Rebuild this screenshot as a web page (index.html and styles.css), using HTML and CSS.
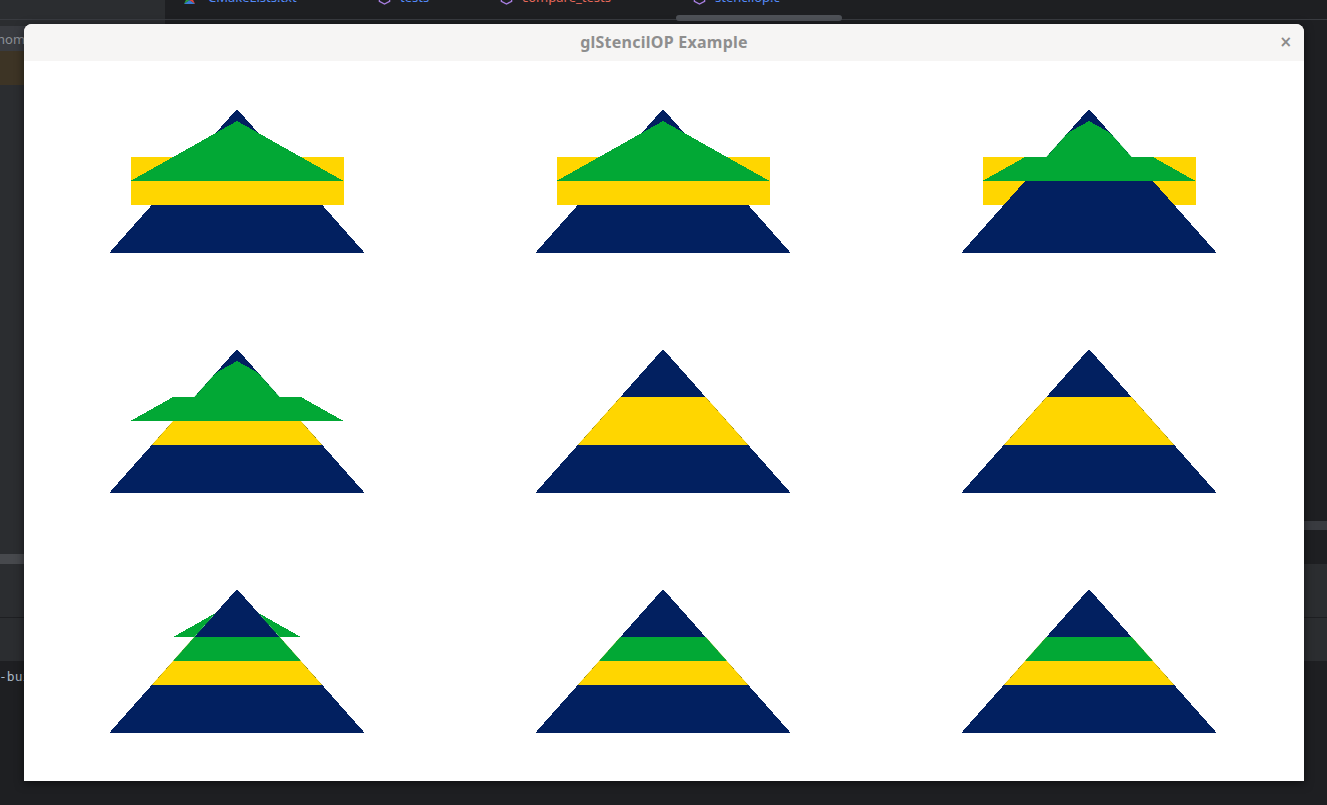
FILE: index.html
```html
<!DOCTYPE html>
<html lang="en">
<head>
<meta charset="utf-8">
<title>glStencilOP Example</title>
<link rel="stylesheet" href="styles.css">
</head>
<body>
<div class="ide">
  <div class="topbar">
    <div class="proj-head"></div>
    <div class="tabs">
      <div class="tab tab-1">
        <svg class="ticon" viewBox="0 0 14 14"><polygon points="7,1 1,13 7,9" fill="#2a9d3c"/><polygon points="7,1 13,13 7,9" fill="#e0443a"/><polygon points="1,13 13,13 7,9" fill="#3a7bd5"/></svg>
        <span class="tlabel blue">CMakeLists.txt</span>
      </div>
      <div class="tab tab-2">
        <svg class="ticon" viewBox="0 0 14 14"><polygon points="7,1 12.5,4 12.5,10 7,13 1.5,10 1.5,4" fill="none" stroke="#a77ee0" stroke-width="1.5"/></svg>
        <span class="tlabel blue">tests</span>
      </div>
      <div class="tab tab-3">
        <svg class="ticon" viewBox="0 0 14 14"><polygon points="7,1 12.5,4 12.5,10 7,13 1.5,10 1.5,4" fill="none" stroke="#a77ee0" stroke-width="1.5"/></svg>
        <span class="tlabel red">compare_tests</span>
      </div>
      <div class="tab tab-4">
        <svg class="ticon" viewBox="0 0 14 14"><polygon points="7,1 12.5,4 12.5,10 7,13 1.5,10 1.5,4" fill="none" stroke="#a77ee0" stroke-width="1.5"/></svg>
        <span class="tlabel blue">stencilop.c</span>
      </div>
    </div>
  </div>
  <div class="main">
    <div class="project">
      <div class="pj-gap"></div>
      <div class="pj-path"><span class="pj-text">home</span></div>
      <div class="pj-sel"></div>
      <div class="pj-tree"></div>
      <div class="pj-scroll"></div>
    </div>
    <div class="editor">
      <div class="code"></div>
      <div class="ed-scroll"></div>
      <div class="ed-foot"></div>
    </div>
  </div>
  <div class="tool">
    <div class="tool-head"></div>
    <div class="tool-tabs"></div>
    <div class="terminal"><span class="term-text">-build</span></div>
  </div>
</div>
<div class="hthumb"></div>

<div class="window">
  <div class="titlebar">
    <span></span>
    <span class="wtitle">glStencilOP Example</span>
    <span class="wclose">×</span>
  </div>
  <div class="canvas">
    <div class="cell">
      <svg class="gl" viewBox="-1 -1 2 2" preserveAspectRatio="none" shape-rendering="crispEdges">
        <use href="#shN" class="navy"/><use href="#shY" class="yel"/><use href="#shG" class="grn"/>
      </svg>
    </div>
    <div class="cell">
      <svg class="gl" viewBox="-1 -1 2 2" preserveAspectRatio="none" shape-rendering="crispEdges">
        <use href="#shN" class="navy"/><use href="#shY" class="yel"/><use href="#shG" class="grn"/>
      </svg>
    </div>
    <div class="cell">
      <svg class="gl" viewBox="-1 -1 2 2" preserveAspectRatio="none" shape-rendering="crispEdges">
        <use href="#shY" class="yel"/><use href="#shN" class="navy"/><use href="#shG" class="grn" clip-path="url(#cNY)"/>
      </svg>
    </div>
    <div class="cell">
      <svg class="gl" viewBox="-1 -1 2 2" preserveAspectRatio="none" shape-rendering="crispEdges">
        <use href="#shN" class="navy"/><use href="#shY" class="yel" clip-path="url(#cN)"/><use href="#shG" class="grn" clip-path="url(#cNY)"/>
      </svg>
    </div>
    <div class="cell">
      <svg class="gl" viewBox="-1 -1 2 2" preserveAspectRatio="none" shape-rendering="crispEdges">
        <use href="#shN" class="navy"/><use href="#shY" class="yel" clip-path="url(#cN)"/>
      </svg>
    </div>
    <div class="cell">
      <svg class="gl" viewBox="-1 -1 2 2" preserveAspectRatio="none" shape-rendering="crispEdges">
        <use href="#shN" class="navy"/><use href="#shY" class="yel" clip-path="url(#cN)"/>
      </svg>
    </div>
    <div class="cell">
      <svg class="gl" viewBox="-1 -1 2 2" preserveAspectRatio="none" shape-rendering="crispEdges">
        <use href="#shN" class="navy"/><use href="#shY" class="yel" clip-path="url(#cN)"/>
        <g clip-path="url(#cY)"><use href="#shG" class="grn" clip-path="url(#cN)"/></g>
        <use href="#shG" class="grn" mask="url(#mOut)"/>
      </svg>
    </div>
    <div class="cell">
      <svg class="gl" viewBox="-1 -1 2 2" preserveAspectRatio="none" shape-rendering="crispEdges">
        <use href="#shN" class="navy"/><use href="#shY" class="yel" clip-path="url(#cN)"/>
        <g clip-path="url(#cY)"><use href="#shG" class="grn" clip-path="url(#cN)"/></g>
      </svg>
    </div>
    <div class="cell">
      <svg class="gl" viewBox="-1 -1 2 2" preserveAspectRatio="none" shape-rendering="crispEdges">
        <use href="#shN" class="navy"/><use href="#shY" class="yel" clip-path="url(#cN)"/>
        <g clip-path="url(#cY)"><use href="#shG" class="grn" clip-path="url(#cN)"/></g>
      </svg>
    </div>
  </div>
</div>

<svg class="defs" width="0" height="0" aria-hidden="true">
  <defs>
    <polygon id="shN" points="0,-0.6 -0.6,0.6 0.6,0.6"/>
    <rect id="shY" x="-0.5" y="-0.2" width="1" height="0.4"/>
    <polygon id="shG" points="0,-0.5 -0.5,0 0.5,0"/>
    <clipPath id="cN" clipPathUnits="userSpaceOnUse"><polygon points="0,-0.6 -0.6,0.6 0.6,0.6"/></clipPath>
    <clipPath id="cY" clipPathUnits="userSpaceOnUse"><rect x="-0.5" y="-0.2" width="1" height="0.4"/></clipPath>
    <clipPath id="cNY" clipPathUnits="userSpaceOnUse"><polygon points="0,-0.6 -0.6,0.6 0.6,0.6"/><rect x="-0.5" y="-0.2" width="1" height="0.4"/></clipPath>
    <mask id="mOut" maskUnits="userSpaceOnUse" x="-1" y="-1" width="2" height="2">
      <rect x="-1" y="-1" width="2" height="2" fill="#fff"/>
      <polygon points="0,-0.6 -0.6,0.6 0.6,0.6" fill="#000"/>
      <rect x="-0.5" y="-0.2" width="1" height="0.4" fill="#000"/>
    </mask>
  </defs>
</svg>
</body>
</html>
```

FILE: styles.css
```css
html, body {
  margin: 0;
  padding: 0;
}
body {
  width: 1327px;
  height: 805px;
  overflow: hidden;
  background: #1e1f22;
  font-family: "Noto Sans", "DejaVu Sans", sans-serif;
  position: relative;
}

/* ---------- IDE background ---------- */
.ide {
  display: flex;
  flex-direction: column;
  height: 805px;
}
.topbar {
  height: 19px;
  display: flex;
  border-bottom: 1px solid #393b40;
  overflow: hidden;
}
.proj-head {
  width: 165px;
  background: #2b2d30;
  border-right: 1px solid #1e1f22;
}
.tabs {
  flex: 1;
  display: flex;
  align-items: flex-start;
  padding-left: 17px;
  background: #1e1f22;
  overflow: hidden;
}
.tab {
  display: flex;
  align-items: flex-start;
  gap: 9px;
  flex: none;
}
.tab-1 { width: 195px; gap: 12px; }
.tab-2 { width: 122px; }
.tab-3 { width: 193px; }
.ticon {
  width: 13px;
  height: 13px;
  margin-top: -8px;
  flex: none;
}
.tlabel {
  font-size: 13px;
  line-height: 16px;
  margin-top: -11px;
  white-space: nowrap;
}
.blue { color: #548af7; }
.red { color: #e5685a; }

.hthumb {
  position: absolute;
  left: 676px;
  top: 15px;
  width: 166px;
  height: 6px;
  border-radius: 3px;
  background: #4e5157;
}

.main {
  height: 544px;
  display: flex;
}
.project {
  width: 165px;
  display: flex;
  flex-direction: column;
  background: #2b2d30;
}
.pj-gap { height: 6px; }
.pj-path {
  height: 25px;
  background: #393b40;
  display: flex;
  align-items: center;
}
.pj-text {
  margin-left: -3px;
  font-size: 13px;
  color: #8c9096;
}
.pj-sel {
  height: 34px;
  background: #3d3425;
}
.pj-tree { flex: 1; }
.pj-scroll {
  height: 10px;
  background: #47494d;
}
.editor {
  flex: 1;
  display: flex;
  flex-direction: column;
  background: #1e1f22;
}
.code { height: 501px; }
.ed-scroll {
  height: 9px;
  background: #393b40;
}
.ed-foot { flex: 1; }

.tool {
  flex: 1;
  display: flex;
  flex-direction: column;
}
.tool-head {
  height: 53px;
  background: #2b2d30;
  border-bottom: 1px solid #1e1f22;
}
.tool-tabs {
  height: 43px;
  background: #2b2d30;
}
.terminal {
  flex: 1;
  background: #1e1f22;
  padding-top: 7px;
}
.term-text {
  display: block;
  margin-left: -1px;
  font-family: "DejaVu Sans Mono", monospace;
  font-size: 13px;
  line-height: 18px;
  color: #a9b7c6;
}

/* ---------- window ---------- */
.window {
  position: absolute;
  left: 24px;
  top: 24px;
  width: 1280px;
  height: 757px;
  border-radius: 8px 8px 0 0;
  overflow: hidden;
  background: #ffffff;
  box-shadow: 0 2px 10px rgba(0, 0, 0, 0.55);
  display: flex;
  flex-direction: column;
}
.titlebar {
  height: 37px;
  flex: none;
  background: #f6f5f4;
  display: grid;
  grid-template-columns: 1fr auto 1fr;
  align-items: center;
}
.wtitle {
  font-family: "Noto Sans", sans-serif;
  font-weight: 700;
  font-size: 16px;
  line-height: 20px;
  margin-top: -2px;
  letter-spacing: 0.25px;
  color: #8e8e8e;
  white-space: nowrap;
}
.wclose {
  justify-self: end;
  margin-right: 12px;
  margin-top: -2px;
  font-family: "DejaVu Sans", sans-serif;
  font-weight: 700;
  font-size: 15px;
  color: #8a8a8a;
}
.canvas {
  height: 720px;
  flex: none;
  display: grid;
  grid-template-columns: 426px 426px minmax(0, 1fr);
  grid-template-rows: repeat(3, 240px);
  background: #ffffff;
}
.cell {
  min-width: 0;
  min-height: 0;
  overflow: hidden;
  display: flex;
  justify-content: flex-start;
}
.gl {
  width: 426px;
  height: 240px;
  flex: none;
  display: block;
}
.navy { fill: #022060; }
.yel { fill: #ffd600; }
.grn { fill: #02a835; }

.defs {
  display: block;
  width: 0;
  height: 0;
  overflow: hidden;
}
```
